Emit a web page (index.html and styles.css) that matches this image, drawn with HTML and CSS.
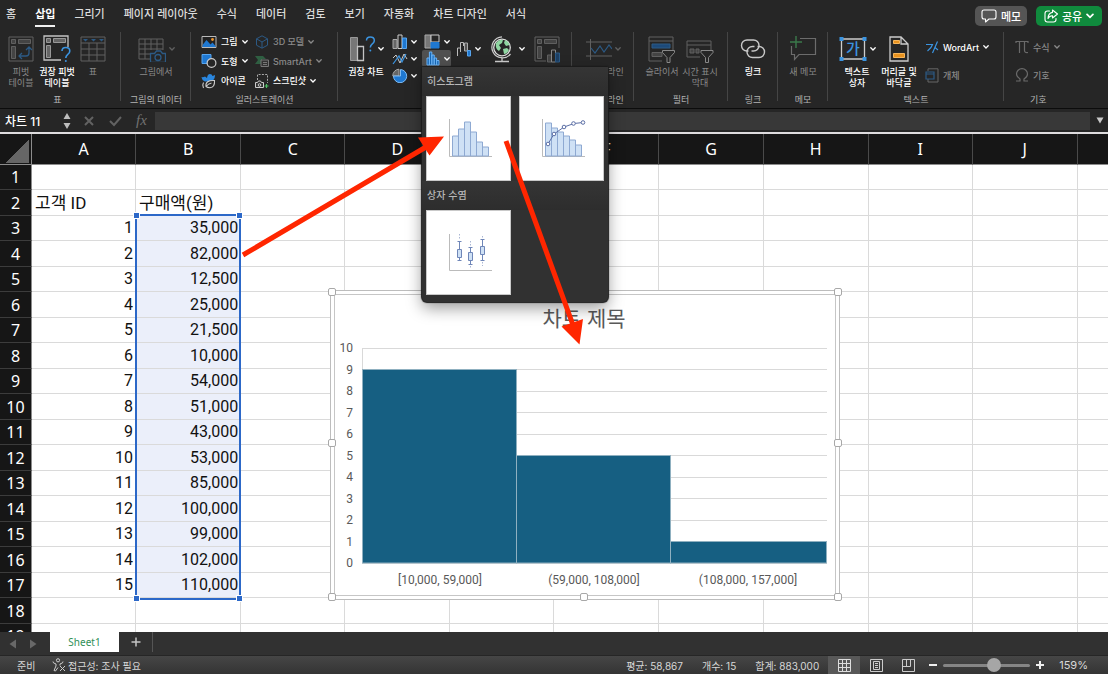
FILE: index.html
```html
<!DOCTYPE html>
<html lang="ko">
<head>
<meta charset="utf-8">
<title>Sheet1</title>
<link rel="stylesheet" href="styles.css">
</head>
<body>
<svg class="defs" aria-hidden="true">
  <symbol id="chev" viewBox="0 0 6 4"><path d="M.8.8 3 3 5.2.8" fill="none" stroke="currentColor" stroke-width="1.3" stroke-linecap="round"/></symbol>
</svg>

<header class="tabs">
  <nav class="tab-list">
    <button class="tab">홈</button>
    <button class="tab tab-active">삽입</button>
    <button class="tab">그리기</button>
    <button class="tab">페이지 레이아웃</button>
    <button class="tab">수식</button>
    <button class="tab">데이터</button>
    <button class="tab">검토</button>
    <button class="tab">보기</button>
    <button class="tab">자동화</button>
    <button class="tab">차트 디자인</button>
    <button class="tab">서식</button>
  </nav>
  <div class="tab-actions">
    <button class="pill pill-memo">
      <svg width="16" height="14" viewBox="0 0 16 14" fill="none" stroke="currentColor" stroke-width="1.1" stroke-linejoin="round"><path d="M3 1h10q2 0 2 2v5q0 2-2 2H8l-3.500 3V10H3Q1 10 1 8V3q0-2 2-2z"/></svg>
      메모</button>
    <button class="pill pill-share">
      <svg width="14" height="14" viewBox="0 0 14 14" fill="none" stroke="currentColor" stroke-width="1.1" stroke-linejoin="round" stroke-linecap="round"><path d="M5.500 2H3.500Q1 2 1 4.500v6Q1 13 3.500 13h6q2.500 0 2.500-2.500V9.500M8.500 1l5 4-5 4V6.700Q5.500 6.500 4 9.500 4.200 4 8.500 3.400z"/></svg>
      공유
      <svg class="chev-lg"><use href="#chev"/></svg></button>
  </div>
</header>

<section class="ribbon">
  <div class="group g-table">
    <div class="group-body">
      <button class="big off w36">
        <span class="icon"><svg width="26" height="26" viewBox="0 0 26 26" fill="none" stroke="currentColor"><path d="M1 1h24v24H1z"/><path d="M3.500 3.500h4v4h-4zM10.500 3.500h12v4h-12zM3.500 10.500h4v12h-4z" fill="#444"/><path d="M11 20h7q3 0 3-3v-6M14 17l-3 3 3 3M18 14l3-3 3 3" stroke="#2c5a85" stroke-width="1.300"/></svg></span>
        <span>피벗<br>테이블</span></button>
      <button class="big w36">
        <span class="icon"><svg width="28" height="28" viewBox="0 0 28 28" fill="none" stroke="#c4c4c4"><path d="M18 25H1V1h24v11" stroke-width="1.300"/><path d="M3.500 3.500h4v4h-4zM10.500 3.500h12v4h-12zM3.500 10.500h4v12h-4z" fill="#666" stroke="#999"/><path d="M19 16q0-3.500 3.800-3.500 4 0 4 3.500 0 2-2 3.300-2 1.500-2 3.700" stroke="#3b94e0" stroke-width="1.600"/><circle cx="22.800" cy="26" r="1" fill="#3b94e0" stroke="none"/></svg></span>
        <span>권장 피벗<br>테이블</span></button>
      <button class="big off w36">
        <span class="icon"><svg width="26" height="26" viewBox="0 0 26 26" fill="none" stroke="currentColor"><path d="M1 1h24v24H1zM1 7h24M1 13h24M1 19h24M9 7v18M17 7v18"/><path d="M3 3h5L5.500 5.500zM11 3h5l-2.500 2.500zM19 3h5l-2.500 2.500z" fill="#2c5a85" stroke="none"/></svg></span>
        <span>표</span></button>
    </div>
    <div class="group-label">표</div>
  </div>

  <div class="group g-picdata">
    <div class="group-body">
      <button class="big off">
        <span class="icon"><svg width="28" height="26" viewBox="0 0 28 26" fill="none" stroke="currentColor"><path d="M12 23H1V3h24v11M1 8h24M1 13h24M1 18h11M7 3v20M13 3v11M19 3v11"/><path d="M12.500 17.500h4l2-2.500h4l2 2.500h3v9h-15z" stroke="#2c5a85" stroke-width="1.300" fill="#262626"/><circle cx="20" cy="21.500" r="3" stroke="#2c5a85" stroke-width="1.300"/></svg><svg class="chev"><use href="#chev"/></svg></span>
        <span>그림에서</span></button>
    </div>
    <div class="group-label">그림의 데이터</div>
  </div>

  <div class="group g-illus">
    <div class="group-body illus-grid">
      <button class="small">
        <svg width="16" height="14" viewBox="0 0 16 14"><path d="M1 1.500h14v11H1z" fill="#222" stroke="#bbb"/><path d="M1.500 12v-2l4-5 4 4.500 2-2 3 3.500v1z" fill="#1f78d1"/><circle cx="11.500" cy="4.500" r="1.400" fill="#f0962c"/></svg>
        <span>그림</span><svg class="chev"><use href="#chev"/></svg></button>
      <button class="small off">
        <svg width="14" height="14" viewBox="0 0 14 14" fill="none" stroke="#2c5a85"><path d="M7 .8l5.500 3v6.400L7 13.200l-5.500-3V3.800zM1.500 3.800 7 7l5.500-3.200M7 7v6"/></svg>
        <span>3D 모델</span><svg class="chev"><use href="#chev"/></svg></button>
      <button class="small">
        <svg width="16" height="14" viewBox="0 0 16 14"><path d="M1 .5h9v9H1z" fill="#1f78d1" stroke="#58a5ee"/><circle cx="10.500" cy="9" r="4.400" fill="#262626" stroke="#ccc" stroke-width="1.200"/></svg>
        <span>도형</span><svg class="chev"><use href="#chev"/></svg></button>
      <button class="small off">
        <svg width="14" height="14" viewBox="0 0 14 14"><path d="M0 2h8l3 3H7v5H0l3-4z" fill="#2f5f42"/><path d="M6 6h7.500v6.500H6zM8 8.500h4M8 10.500h4" fill="#333" stroke="#777"/></svg>
        <span>SmartArt</span><svg class="chev"><use href="#chev"/></svg></button>
      <button class="small">
        <svg width="16" height="16" viewBox="0 0 16 16"><path d="M.5 4q2 .5 3.500-.5L6 5q.5-4 3-4 2 0 2.500 2L14 2q0 5-3.500 6L4 8.500Q1 7.500.5 4z" fill="#2a86dd"/><path d="M5 13.500q-1-6.500 8.500-6 .5 7-4.500 7.200-2.500 0-4-1.200zm0 0q2.500-3 5.500-3.500M2.500 15q-1.500-3 0-5.500" fill="#262626" stroke="#ccc" stroke-width="1.100"/></svg>
        <span>아이콘</span></button>
      <button class="small">
        <svg width="14" height="16" viewBox="0 0 14 16" fill="none"><path d="M2.500 7V1.500h10V10" stroke="#aaa" stroke-dasharray="2 1.300"/><path d="M.5 9.500h2l1-1.500h2l1 1.500h2v5h-8z" stroke="#ccc" fill="#333"/><circle cx="4.500" cy="12" r="1.300" stroke="#ccc"/><path d="M9.500 13h4M11.500 11v4" stroke="#4fc365" stroke-width="1.200"/></svg>
        <span>스크린샷</span><svg class="chev"><use href="#chev"/></svg></button>
    </div>
    <div class="group-label">일러스트레이션</div>
  </div>

  <div class="group g-chart">
    <div class="group-body">
      <button class="big w38">
        <span class="icon"><svg width="26" height="26" viewBox="0 0 26 26" fill="none"><path d="M1.500 1.500h7v23h-7z" fill="#777" stroke="#999"/><path d="M8.500 10.500h6v14h-6z" stroke="#c4c4c4" stroke-width="1.300"/><path d="M17.500 4.500q0-3.500 3.800-3.500 4 0 4 3.500 0 2-2 3.300-2 1.500-2 3.700" stroke="#3b94e0" stroke-width="1.500"/><circle cx="21.300" cy="14.500" r="1" fill="#3b94e0"/></svg><svg class="chev"><use href="#chev"/></svg></span>
        <span>권장 차트</span></button>
      <div class="stack">
        <button class="mini" aria-label="세로 막대형"><svg width="16" height="15" viewBox="0 0 16 15"><path d="M1 5.500h4v9H1z" fill="#666" stroke="#aaa"/><path d="M6 1h4v13.500H6z" fill="#262626" stroke="#ccc"/><path d="M10.500 4h4v10.500h-4z" fill="#1f78d1" stroke="#58a5ee"/></svg><svg class="chev"><use href="#chev"/></svg></button>
        <button class="mini" aria-label="꺾은선형"><svg width="16" height="14" viewBox="0 0 16 14" fill="none"><path d="M1 6l3-3 4 8 4-9 3 5" stroke="#ccc"/><path d="M1 12l6-8 3 6 4-8" stroke="#3b94e0" stroke-width="1.200"/></svg><svg class="chev"><use href="#chev"/></svg></button>
        <button class="mini" aria-label="원형"><svg width="16" height="15" viewBox="0 0 16 15"><path d="M7 8V1.200A6.500 6.500 0 0 0 .8 8z" fill="#666" stroke="#aaa"/><path d="M8.500 1.500V8H1.500a6.600 6.600 0 1 0 7-6.500z" fill="#1f78d1" stroke="#7fbcf5"/></svg><svg class="chev"><use href="#chev"/></svg></button>
      </div>
      <div class="stack stack-b">
        <button class="mini" aria-label="트리맵"><svg width="16" height="15" viewBox="0 0 16 15"><path d="M1 1h6v13H1z" fill="#777" stroke="#aaa"/><path d="M7 1h8v7H7z" fill="#262626" stroke="#ccc"/><path d="M7 8.500h8V14H7z" fill="#1f78d1" stroke="#1f78d1"/></svg><svg class="chev"><use href="#chev"/></svg></button>
        <div class="menu-anchor">
          <button class="mini mini-on" aria-label="히스토그램" aria-expanded="true"><svg width="14" height="15" viewBox="0 0 14 15" fill="#1667b5" stroke="#6cb4f7"><path d="M1 7h2.400v7H1zM3.400 1h2.400v13H3.400zM5.800 4h2.400v10H5.800zM8.200 7h2.400v7H8.200zM10.600 9.500H13V14h-2.400z"/></svg><svg class="chev"><use href="#chev"/></svg></button>
          <div class="menu">
            <h2 class="menu-title">히스토그램</h2>
            <div class="tiles">
              <button class="tile" aria-label="히스토그램">
                <svg width="83" height="83" viewBox="0 0 83 83" fill="#cfe1f5" stroke="#8ea9d2"><path d="M22.500 22v37.500H65" fill="none" stroke="#bbb"/><path d="M25.500 39h6v20h-6zM31.500 32h6v27h-6zM37.500 25h6v34h-6zM43.500 35h6v24h-6zM49.500 45h6v14h-6zM55.500 50h6v9h-6z"/></svg></button>
              <button class="tile" aria-label="파레토">
                <svg width="83" height="83" viewBox="0 0 83 83" fill="#cfe1f5" stroke="#8ea9d2"><path d="M22.500 22v37.500H65" fill="none" stroke="#bbb"/><path d="M25.500 26h6v33h-6zM31.500 31h6v28h-6zM37.500 35h6v24h-6zM43.500 39h6v20h-6zM49.500 43h6v16h-6zM55.500 48h6v11h-6z"/><path d="M28 47l6-10 10-7 10-3.500 9-1" fill="none" stroke="#5b6ea5"/><g fill="#fff" stroke="#5b6ea5"><circle cx="28" cy="47" r="1.800"/><circle cx="34" cy="37" r="1.800"/><circle cx="44" cy="30" r="1.800"/><circle cx="53.500" cy="26.500" r="1.800"/><circle cx="63" cy="25.500" r="1.800"/></g></svg></button>
            </div>
            <h2 class="menu-title">상자 수염</h2>
            <div class="tiles">
              <button class="tile" aria-label="상자 수염">
                <svg width="83" height="83" viewBox="0 0 83 83" fill="#cfe1f5" stroke="#6f86b8"><path d="M22.500 23v36.500H65" fill="none" stroke="#bbb"/><path d="M32.500 31v18M30.500 30.500h4M30.500 49.500h4M43.500 37v16M41.500 36.500h4M41.500 53.500h4M55.500 29v20M53.500 28.500h4M53.500 49.500h4"/><path d="M32.500 23v6M43.500 30v5M43.500 55v3M55.500 25v3M55.500 51v4" stroke-dasharray="1.500 1.500" stroke="#aab7d4"/><path d="M30.500 38.500h4v8h-4zM41.500 41.500h4v8h-4zM53.500 35.500h4v8h-4z"/></svg></button>
            </div>
          </div>
        </div>
      </div>
      <button class="mini mini-tall" aria-label="폭포"><svg width="16" height="16" viewBox="0 0 16 16" fill="none"><path d="M1.500 15V7h3v-5.500h3V5" stroke="#bbb"/><path d="M4.500 7v4" stroke="#bbb"/><path d="M8.500 2v8h3V2z" fill="#555" stroke="#aaa"/><path d="M11.500 9.500h3V15h-3z" fill="#1f78d1" stroke="#58a5ee"/></svg><svg class="chev"><use href="#chev"/></svg></button>
      <button class="mini mini-globe" aria-label="지도"><svg width="24" height="27" viewBox="0 0 24 27" fill="none"><circle cx="12" cy="11.500" r="8.300" stroke="#ddd" stroke-width="1.300"/><path d="M6 7q3-4 7-3l-1 3-3 2 2 3-2 3q-4-2-3-8zM15 4q4 2 4.500 5L16 10l-2-3zM13 13l4-1 2 2q-2 4-5 4z" fill="#8fd6a2"/><path d="M12 .8A10.500 10.500 0 1 0 20.500 18" stroke="#ccc" stroke-width="1.200"/><path d="M12 22v3M5 25.500h14" stroke="#ccc" stroke-width="1.300"/></svg><svg class="chev"><use href="#chev"/></svg></button>
      <button class="big off w28" aria-label="피벗 차트">
        <span class="icon"><svg width="27" height="27" viewBox="0 0 27 27" fill="none" stroke="currentColor"><path d="M12 25H1V1h24v11"/><path d="M3.500 3.500h4v4h-4zM10.500 3.500h12v4h-12zM3.500 10.500h4v12h-4zM13.500 19h4v7h-4z" fill="#444"/><path d="M17.500 14h4v12h-4z" fill="#262626" stroke="#888"/><path d="M21.500 17h4v9h-4z" fill="#1d3f63" stroke="#2c5a85"/></svg></span></button>
    </div>
    <div class="group-label">차트</div>
  </div>

  <div class="group g-spark">
    <div class="group-body">
      <button class="big off">
        <span class="icon"><svg width="26" height="26" viewBox="0 0 26 26" fill="none" stroke="currentColor"><path d="M4.500 3v21M0 6h26M0 20h26"/><path d="M5 12l4 5 5-7 4 6 5-7 3 4" stroke="#2c5a85" stroke-width="1.200"/></svg><svg class="chev"><use href="#chev"/></svg></span>
        <span>스파크라인</span></button>
    </div>
    <div class="group-label">스파크라인</div>
  </div>

  <div class="group g-filter">
    <div class="group-body">
      <button class="big off w38">
        <span class="icon"><svg width="28" height="27" viewBox="0 0 28 27" fill="none" stroke="currentColor"><path d="M14 25H1V1h24v13M1 5h24"/><path d="M4 8h18v4H4z" fill="#1d4a7a" stroke="#2c5a85"/><path d="M4 16.500h10v4H4z" fill="#444"/><path d="M14.500 14.500h12v2l-4.500 5v5h-3v-5l-4.500-5z" fill="#262626" stroke="#888"/></svg></span>
        <span>슬라이서</span></button>
      <button class="big off w38">
        <span class="icon"><svg width="28" height="27" viewBox="0 0 28 27" fill="none" stroke="currentColor"><path d="M14 21H1V5h24v9M1 9h24"/><path d="M4 13h4v4H4zM10 13h3v4h-3z" fill="#444"/><path d="M15 14.500h12v2l-4.500 5v5h-3v-5l-4.500-5z" fill="#262626" stroke="#888"/></svg></span>
        <span>시간 표시<br>막대</span></button>
    </div>
    <div class="group-label">필터</div>
  </div>

  <div class="group g-link">
    <div class="group-body">
      <button class="big w38">
        <span class="icon"><svg width="26" height="26" viewBox="0 0 26 26" fill="none" stroke="#c8c8c8" stroke-width="1.400"><path d="M8.500 15H7A5.500 5.500 0 0 1 7 4h6.500a5.500 5.500 0 0 1 0 11h-2"/><path d="M17.500 10.500H19a5.500 5.500 0 0 1 0 11h-6.500a5.500 5.500 0 0 1 0-11h2"/></svg></span>
        <span>링크</span></button>
    </div>
    <div class="group-label">링크</div>
  </div>

  <div class="group g-memo">
    <div class="group-body">
      <button class="big off w38">
        <span class="icon"><svg width="28" height="26" viewBox="0 0 28 26" fill="none" stroke="#6c6c6c" stroke-width="1.200"><path d="M11 2.500h15.500v16H10l-4.500 5v-5h-3V10"/><path d="M7 0v12M1 6h12" stroke="#3b7a4b" stroke-width="1.400"/></svg></span>
        <span>새 메모</span></button>
    </div>
    <div class="group-label">메모</div>
  </div>

  <div class="group g-text">
    <div class="group-body">
      <button class="big w40">
        <span class="icon"><svg width="28" height="26" viewBox="0 0 28 26" fill="none"><path d="M2.500 3h23v20h-23z" stroke="#ccc" stroke-width="1.300"/><path d="M.5 1h4v4h-4zM23.500 1h4v4h-4zM.5 21h4v4h-4zM23.500 21h4v4h-4z" fill="#3b94e0"/><text x="7" y="18" class="glyph-ga">가</text></svg><svg class="chev"><use href="#chev"/></svg></span>
        <span>텍스트<br>상자</span></button>
      <button class="big w44">
        <span class="icon"><svg width="20" height="26" viewBox="0 0 20 26" fill="none"><path d="M1 1h11l7 7v17H1zM12 1v7h7" stroke="#ccc" stroke-width="1.300"/><path d="M4.500 4.500h6v3h-6zM4.500 17.500h11v4h-11z" fill="#e8921e" stroke="#f7b65b"/></svg></span>
        <span>머리글 및<br>바닥글</span></button>
      <div class="pair">
        <button class="small"><svg width="14" height="14" viewBox="0 0 14 14" fill="none" stroke="#3b94e0" stroke-width="1.200"><path d="M1 4.500h6.500Q6.500 8 2.500 11M12.500 1.500l-5 11.500M10 7.500l3 2.500"/></svg><span>WordArt</span><svg class="chev"><use href="#chev"/></svg></button>
        <button class="small off"><svg width="14" height="15" viewBox="0 0 14 15" fill="none"><path d="M3 3V.8h10V14H3v-3" stroke="#666"/><path d="M1 4h8v7H1zM1 6h8" stroke="#2c5a85" stroke-width="1.200"/></svg><span>개체</span></button>
      </div>
    </div>
    <div class="group-label">텍스트</div>
  </div>

  <div class="group g-symbol">
    <div class="group-body">
      <div class="pair">
        <button class="small off"><svg width="14" height="14" viewBox="0 0 14 14" fill="none" stroke="#6a6a6a" stroke-width="1.200"><path d="M1 3V1.500h12V3M4.500 1.500V13M9.500 1.500v9q0 2.500 3.500 2"/></svg><span>수식</span><svg class="chev"><use href="#chev"/></svg></button>
        <button class="small off"><svg width="14" height="14" viewBox="0 0 14 14" fill="none" stroke="#6a6a6a" stroke-width="1.200"><path d="M1 13h4v-2Q1.500 9 1.500 6a5.500 5.300 0 0 1 11 0q0 3-3.500 5v2h4"/></svg><span>기호</span></button>
      </div>
    </div>
    <div class="group-label">기호</div>
  </div>
</section>

<section class="formula">
  <input class="name-box" aria-label="이름 상자" value="차트 11">
  <svg class="step" width="8" height="18" viewBox="0 0 8 18" fill="#bdbdbd"><path d="M4 1l3.500 6h-7zM4 17l3.500-6h-7z"/></svg>
  <div class="formula-tools">
    <button class="tool" aria-label="취소"><svg width="12" height="12" viewBox="0 0 12 12" stroke="#626262" stroke-width="2"><path d="M2 2l8 8M10 2l-8 8"/></svg></button>
    <button class="tool" aria-label="입력"><svg width="13" height="12" viewBox="0 0 13 12" fill="none" stroke="#626262" stroke-width="2"><path d="M1 6l4 4 7-8"/></svg></button>
    <button class="tool fx">fx</button>
  </div>
  <input class="formula-input" aria-label="수식 입력줄">
  <button class="expand" aria-label="수식 입력줄 확장"><svg width="8" height="7" viewBox="0 0 8 7" fill="#c8c8c8"><path d="M.5.500h7L4 6.500z"/></svg></button>
</section>

<main class="sheet">
  <table class="grid">
    <colgroup id="cols"></colgroup>
    <thead><tr id="head"></tr></thead>
    <tbody id="rows"></tbody>
  </table>
  <div class="selection"><i></i><i></i><i></i><i></i></div>
  <svg class="chart" width="516" height="314" viewBox="328 288 516 314">
    <path d="M330.500 290.500h509v309h-509z" fill="#fff" stroke="#bdbdbd"/>
    <path d="M334.500 294.500h501v301h-501z" fill="#fff" stroke="#c6c6c6"/>
    <text class="chart-title" x="584" y="326">차트 제목</text>
    <g id="plot"></g>
    <g fill="#fff" stroke="#a8a8a8">
      <rect x="328.500" y="288.500" width="7" height="7" rx="1.500"/><rect x="580.500" y="288.500" width="7" height="7" rx="1.500"/><rect x="834.500" y="288.500" width="7" height="7" rx="1.500"/>
      <rect x="328.500" y="439.500" width="7" height="7" rx="1.500"/><rect x="834.500" y="439.500" width="7" height="7" rx="1.500"/>
      <rect x="328.500" y="593.500" width="7" height="7" rx="1.500"/><rect x="580.500" y="593.500" width="7" height="7" rx="1.500"/><rect x="834.500" y="593.500" width="7" height="7" rx="1.500"/>
    </g>
  </svg>
</main>

<footer>
  <div class="sheet-tabs">
    <div class="sheet-nav">
      <button aria-label="이전 시트"><svg width="8" height="10" viewBox="0 0 8 10" fill="#686868"><path d="M7 .5v9L.5 5z"/></svg></button>
      <button aria-label="다음 시트"><svg width="8" height="10" viewBox="0 0 8 10" fill="#686868"><path d="M1 .5v9L7.500 5z"/></svg></button>
    </div>
    <button class="sheet-tab">Sheet1</button>
    <button class="sheet-add" aria-label="시트 추가"><svg width="10" height="10" viewBox="0 0 10 10" stroke="#c4c4c4" stroke-width="1.500"><path d="M5 .5v9M.5 5h9"/></svg></button>
  </div>
  <div class="status">
    <span class="ready">준비</span>
    <button class="access"><svg width="14" height="14" viewBox="0 0 14 14" fill="none" stroke="#ccc"><circle cx="6" cy="2.300" r="1.600"/><path d="M1 3.500q-.5 1.500 3 2.500v2L2 12.500l1.500.5L6 9.500M11 3.500q.5 1.500-3 2.500v1.500M8 8l5 5M13 8l-5 5"/></svg>접근성: 조사 필요</button>
    <div class="stats"><span>평균: 58,867</span><span>개수: 15</span><span>합계: 883,000</span></div>
    <div class="views">
      <button class="view view-on" aria-label="기본"><svg width="13" height="13" viewBox="0 0 13 13" fill="none" stroke="#ddd"><path d="M.5.500h12v12H.5zM.5 4.500h12M.5 8.500h12M4.500.5v12M8.500.5v12"/></svg></button>
      <button class="view" aria-label="페이지 레이아웃"><svg width="13" height="13" viewBox="0 0 13 13" fill="none" stroke="#ccc"><path d="M.5.500h12v12H.5zM3.500 2.500h6v8h-6zM5 4.500h3M5 6.500h3M5 8.500h3"/></svg></button>
      <button class="view" aria-label="페이지 나누기"><svg width="13" height="13" viewBox="0 0 13 13" fill="none" stroke="#ccc"><path d="M.5.500h12v12H.5zM.5 7.500h8v-7M4.500.5v7"/></svg></button>
    </div>
    <div class="zoom">
      <button aria-label="축소"><svg width="8" height="8" viewBox="0 0 8 8" stroke="#eee" stroke-width="2"><path d="M0 4h8"/></svg></button>
      <input type="range" class="zoom-range" aria-label="확대/축소" min="0" max="100" value="60">
      <button aria-label="확대"><svg width="8" height="8" viewBox="0 0 8 8" stroke="#eee" stroke-width="2"><path d="M0 4h8M4 0v8"/></svg></button>
      <span class="zoom-value">159%</span>
    </div>
  </div>
</footer>

<svg class="arrows" width="1108" height="674" viewBox="0 0 1108 674" aria-hidden="true">
  <g stroke="#ff2600" stroke-width="5" fill="#ff2600">
    <path d="M243 255 426 147M506 141l67 184"/>
    <path d="M444 136.500 418 137.500 429.500 155.500zM579.500 344.500 561.500 326.500 583 319z" stroke="none"/>
  </g>
</svg>
<script src="sheet.js"></script>
</body>
</html>
```
FILE: styles.css
```css
* { box-sizing: border-box; }

body {
  margin: 0;
  height: 100vh;
  display: flex;
  flex-direction: column;
  overflow: hidden;
  position: relative;
  background: #262626;
  color: #f0f0f0;
  font-family: Inter, "Noto Sans CJK KR", sans-serif;
  font-size: 9px;
}

button, input {
  font: inherit;
  color: inherit;
  background: none;
  border: 0;
  padding: 0;
  margin: 0;
}

button { display: flex; align-items: center; white-space: nowrap; }
svg { flex: none; display: block; }
.defs { position: absolute; width: 0; height: 0; }
.chev { width: 6px; height: 4px; }
.chev-lg { width: 8px; height: 6px; }

/* tab strip */
.tabs {
  height: 31px;
  flex: none;
  display: flex;
  justify-content: space-between;
  padding: 0 6px;
}
.tab-list { display: flex; gap: 19px; }
.tab {
  height: 27px;
  font-family: "Noto Sans CJK KR", sans-serif;
  font-size: 11px;
  font-weight: 500;
  border-bottom: 2px solid transparent;
  color: #dcdcdc;
}
.tab-active { font-weight: 700; color: #fff; border-color: #f0f0f0; }
.tab-actions { display: flex; gap: 9px; padding-top: 6px; }
.pill {
  height: 20px;
  border-radius: 5px;
  font-size: 11px;
  font-weight: 500;
  gap: 4px;
  justify-content: center;
  color: #fff;
}
.pill-memo { width: 52px; background: #555; }
.pill-share { width: 66px; background: #108a3d; }

/* ribbon */
.ribbon {
  height: 78px;
  flex: none;
  display: flex;
  border-bottom: 1px solid #0c0c0c;
}
.group {
  flex: none;
  position: relative;
  display: flex;
  flex-direction: column;
  padding-top: 2px;
  color: #fff;
}
.group:not(:last-child)::after {
  content: "";
  position: absolute;
  right: 0;
  top: 1px;
  height: 69px;
  width: 1px;
  background: #454545;
}
.group-body { height: 62px; display: flex; justify-content: center; align-items: flex-start; }
.group-label { line-height: 10px; text-align: center; color: #b4b4b4; }
.g-table { width: 121px; }
.g-table .group-body { justify-content: flex-start; padding-left: 3px; }
.g-table .group-label { padding-right: 6px; }
.g-picdata { width: 70px; }
.g-illus { width: 147px; }
.g-chart { width: 234px; }
.g-chart .group-body { justify-content: flex-start; padding-left: 9px; }
.g-spark { width: 62px; }
.g-filter { width: 94px; }
.g-link, .g-memo { width: 50px; }
.g-text { width: 176px; }
.g-text .group-body { justify-content: flex-start; padding-left: 9px; }
.g-symbol { flex: 1 0 68px; }
.g-symbol .group-body { justify-content: flex-start; padding-left: 11px; }
.g-symbol .group-label { text-align: left; padding-left: 26px; }

.big { flex-direction: column; padding-top: 3px; line-height: 11px; text-align: center; font-weight: 500; }
.big .icon { height: 26px; display: flex; align-items: center; justify-content: center; gap: 3px; margin-bottom: 4px; }
.off { color: #8a8a8a; font-weight: 400; }
.off .icon { color: #606060; }
.w28 { width: 28px; }
.w36 { width: 36px; }
.w38 { width: 38px; }
.w40 { width: 40px; }
.w44 { width: 44px; }

.small { gap: 4px; font-weight: 500; }
.illus-grid {
  display: grid;
  grid-template-columns: 54px 80px;
  grid-template-rows: 17px 22px 17px;
  align-items: center;
  justify-content: start;
  padding-left: 10px;
}
.stack { display: flex; flex-direction: column; margin-left: 7px; }
.stack-b { margin-left: 5px; }
.mini { height: 17px; gap: 3px; }
.stack-b .mini { width: 29px; padding-left: 2px; gap: 4px; }
.stack-b .mini-on { background: #505050; border-radius: 2px; padding-left: 4px; }
.mini-tall { height: 32px; margin-left: 5px; }
.mini-globe { height: 32px; margin-left: 9px; gap: 5px; }
.g-chart .w28 { margin-left: 8px; }
.pair { display: flex; flex-direction: column; gap: 12px; padding-top: 6px; }
.g-text .pair { padding-left: 4px; }
.pair .small { height: 16px; }
.glyph-ga { font-family: "Noto Sans CJK KR", sans-serif; font-size: 15px; fill: #3b94e0; }

/* chart type menu */
.menu-anchor { position: relative; }
.menu {
  position: absolute;
  z-index: 5;
  top: 100%;
  left: 0;
  width: 186px;
  padding-bottom: 7px;
  background: #313131;
  border-radius: 2px 2px 5px 5px;
  box-shadow: 0 0 1px 1px #1b1b1b, 0 6px 16px rgba(0, 0, 0, .4);
}
.menu-title {
  margin: 0;
  height: 29px;
  padding-left: 5px;
  font-family: "Noto Sans CJK KR", sans-serif;
  font-size: 10px;
  font-weight: 500;
  line-height: 28px;
  color: #b8b8b8;
  background: linear-gradient(#353535, #2d2d2d);
}
.tiles { display: flex; gap: 8px; padding: 0 4px; }
.tile { background: #fff; border: 1px solid #c9c9c9; width: 85px; height: 85px; }

/* formula bar */
.formula {
  height: 25px;
  flex: none;
  display: flex;
  align-items: center;
  border-bottom: 2px solid #dedcde;
}
.name-box { width: 63px; padding-left: 5px; font-size: 12px; font-weight: 500; color: #fff; }
.formula-tools { width: 84px; display: flex; justify-content: center; gap: 14px; padding-left: 4px; }
.fx { font: italic 15px "Liberation Serif", serif; color: #727272; }
.formula-input { flex: 1; min-width: 0; height: 18px; background: #383838; }
.expand { width: 18px; padding-left: 6px; }

/* worksheet */
.sheet { flex: 1; min-height: 0; position: relative; overflow: hidden; background: #fff; }
.grid {
  width: 1182px;
  table-layout: fixed;
  border-collapse: separate;
  border-spacing: 0;
  font-family: Roboto, "Noto Sans CJK KR", sans-serif;
  font-size: 16px;
  line-height: 20px;
  color: #111;
}
.grid th {
  padding: 0;
  background: #161616;
  color: #fff;
  font-family: "Noto Sans", sans-serif;
  font-weight: 400;
  border-right: 1px solid #4a4a4a;
  border-bottom: 1px solid #3c3c3c;
}
.grid thead th { height: 31px; border-bottom-color: #8c8c8c; }
.grid tbody th, .grid thead th:first-child { border-right-color: #8c8c8c; }
.grid thead th:first-child { background: linear-gradient(to bottom right, transparent 50%, #666 50%) 5px 5px / 24px 24px no-repeat #161616; }
.grid td { padding: 0 2px 0 3px; border-right: 1px solid #dadada; border-bottom: 1px solid #dadada; white-space: nowrap; }
.grid tbody tr { height: 25px; }
.grid tbody tr:nth-child(even) { height: 26px; }
.col-head { width: 32px; }
.col-odd { width: 104px; }
.col-even { width: 105px; }
.num { text-align: right; }
.grid .label { font-size: 17px; }
.grid .num-b { background: #ebeffa; }
.selection {
  position: absolute;
  left: 135px;
  top: 80px;
  width: 106px;
  height: 386px;
  border: 2px solid #2c68c8;
}
.selection i { position: absolute; width: 7px; height: 7px; background: #2c68c8; border: 1px solid #fff; }
.selection i:nth-child(1) { left: -4px; top: -4px; }
.selection i:nth-child(2) { right: -4px; top: -4px; }
.selection i:nth-child(3) { left: -4px; bottom: -4px; }
.selection i:nth-child(4) { right: -4px; bottom: -4px; }

.chart { position: absolute; left: 328px; top: 154px; }
.chart-title { font-family: "Noto Sans CJK KR", sans-serif; font-size: 21px; fill: #595959; text-anchor: middle; }
.axis { font-family: Roboto, sans-serif; font-size: 12px; fill: #595959; }
.axis-y { text-anchor: end; }
.axis-x { text-anchor: middle; }
.rule { stroke: #d9d9d9; }
.bar { fill: #165f82; stroke: #8fb0c0; stroke-width: 1px; }

/* sheet tabs and status bar */
.sheet-tabs { height: 23px; display: flex; background: #313131; }
.sheet-nav { width: 50px; display: flex; align-items: center; justify-content: center; gap: 12px; padding-right: 4px; }
.sheet-tab {
  width: 69px;
  height: 20px;
  justify-content: center;
  background: #fff;
  color: #2f8f57;
  font-family: "Noto Sans", sans-serif;
  font-size: 10px;
}
.sheet-add { width: 34px; height: 20px; justify-content: center; border-right: 1px solid #555; }
.status {
  height: 19px;
  display: flex;
  align-items: center;
  padding: 0 20px 0 17px;
  border-top: 1px solid #262626;
  background: linear-gradient(#464646, #343434);
  font-size: 10px;
  color: #d8d8d8;
}
.ready { width: 35px; }
.access { gap: 2px; flex: 1; }
.stats { display: flex; gap: 19px; }
.views { display: flex; align-self: stretch; margin-left: 9px; }
.view { width: 32px; justify-content: center; }
.view-on { background: #585858; }
.zoom { display: flex; align-items: center; gap: 6px; padding-left: 5px; }
.zoom-range { appearance: none; -webkit-appearance: none; width: 87px; height: 14px; }
.zoom-range::-webkit-slider-runnable-track { height: 3px; border-radius: 2px; background: #858585; }
.zoom-range::-webkit-slider-thumb { -webkit-appearance: none; width: 14px; height: 14px; margin-top: -6px; border-radius: 50%; background: #a6a6a6; }
.zoom-value { padding-left: 9px; font-size: 11px; }

.arrows { position: absolute; left: 0; top: 0; z-index: 10; pointer-events: none; }
```
FILE: sheet.js
```js
const letters = ["A", "B", "C", "D", "E", "F", "G", "H", "I", "J", ""];
const amounts = ["35,000", "82,000", "12,500", "25,000", "21,500", "10,000", "54,000", "51,000", "43,000", "53,000", "85,000", "100,000", "99,000", "102,000", "110,000"];

document.getElementById("cols").innerHTML =
  '<col class="col-head">' + letters.map((_, i) => `<col class="${i % 2 ? "col-even" : "col-odd"}">`).join("");
document.getElementById("head").innerHTML =
  "<th></th>" + letters.map(l => `<th scope="col">${l}</th>`).join("");

let html = "";
for (let r = 1; r <= 19; r++) {
  html += `<tr><th scope="row">${r}</th>`;
  letters.forEach((l, c) => {
    const data = r >= 3 && r <= 17 && c < 2;
    let text = "";
    let cls = "";
    if (r === 2 && c < 2) {
      text = ["고객 ID", "구매액(원)"][c];
      cls = "label";
    }
    if (data) {
      text = c === 0 ? r - 2 : amounts[r - 3];
      cls = c === 0 ? "num" : "num num-b";
    }
    html += `<td class="${cls}">${text}</td>`;
  });
  html += "</tr>";
}
document.getElementById("rows").innerHTML = html;

// histogram: bottom axis at 563, ten steps up to 348
const counts = [9, 5, 1];
const bins = ["[10,000, 59,000]", "(59,000, 108,000]", "(108,000, 157,000]"];
const yOf = v => 563 - v * 21.5;
let plot = "";
for (let v = 0; v <= 10; v++) {
  plot += `<path class="rule" d="M362 ${Math.floor(yOf(v)) + 0.5}H827"/>`;
  plot += `<text class="axis axis-y" x="353" y="${Math.round(yOf(v)) + 4}">${v}</text>`;
}
plot += '<path class="rule" d="M362.500 348V563"/>';
counts.forEach((n, i) => {
  const x = 363 + i * 154;
  plot += `<rect class="bar" x="${x - 0.5}" y="${Math.floor(yOf(n)) + 0.5}" width="${i === 2 ? 156 : 154}" height="${n * 21.5}"/>`;
  plot += `<text class="axis axis-x" x="${x + 77}" y="584">${bins[i]}</text>`;
});
document.getElementById("plot").innerHTML = plot;
```
